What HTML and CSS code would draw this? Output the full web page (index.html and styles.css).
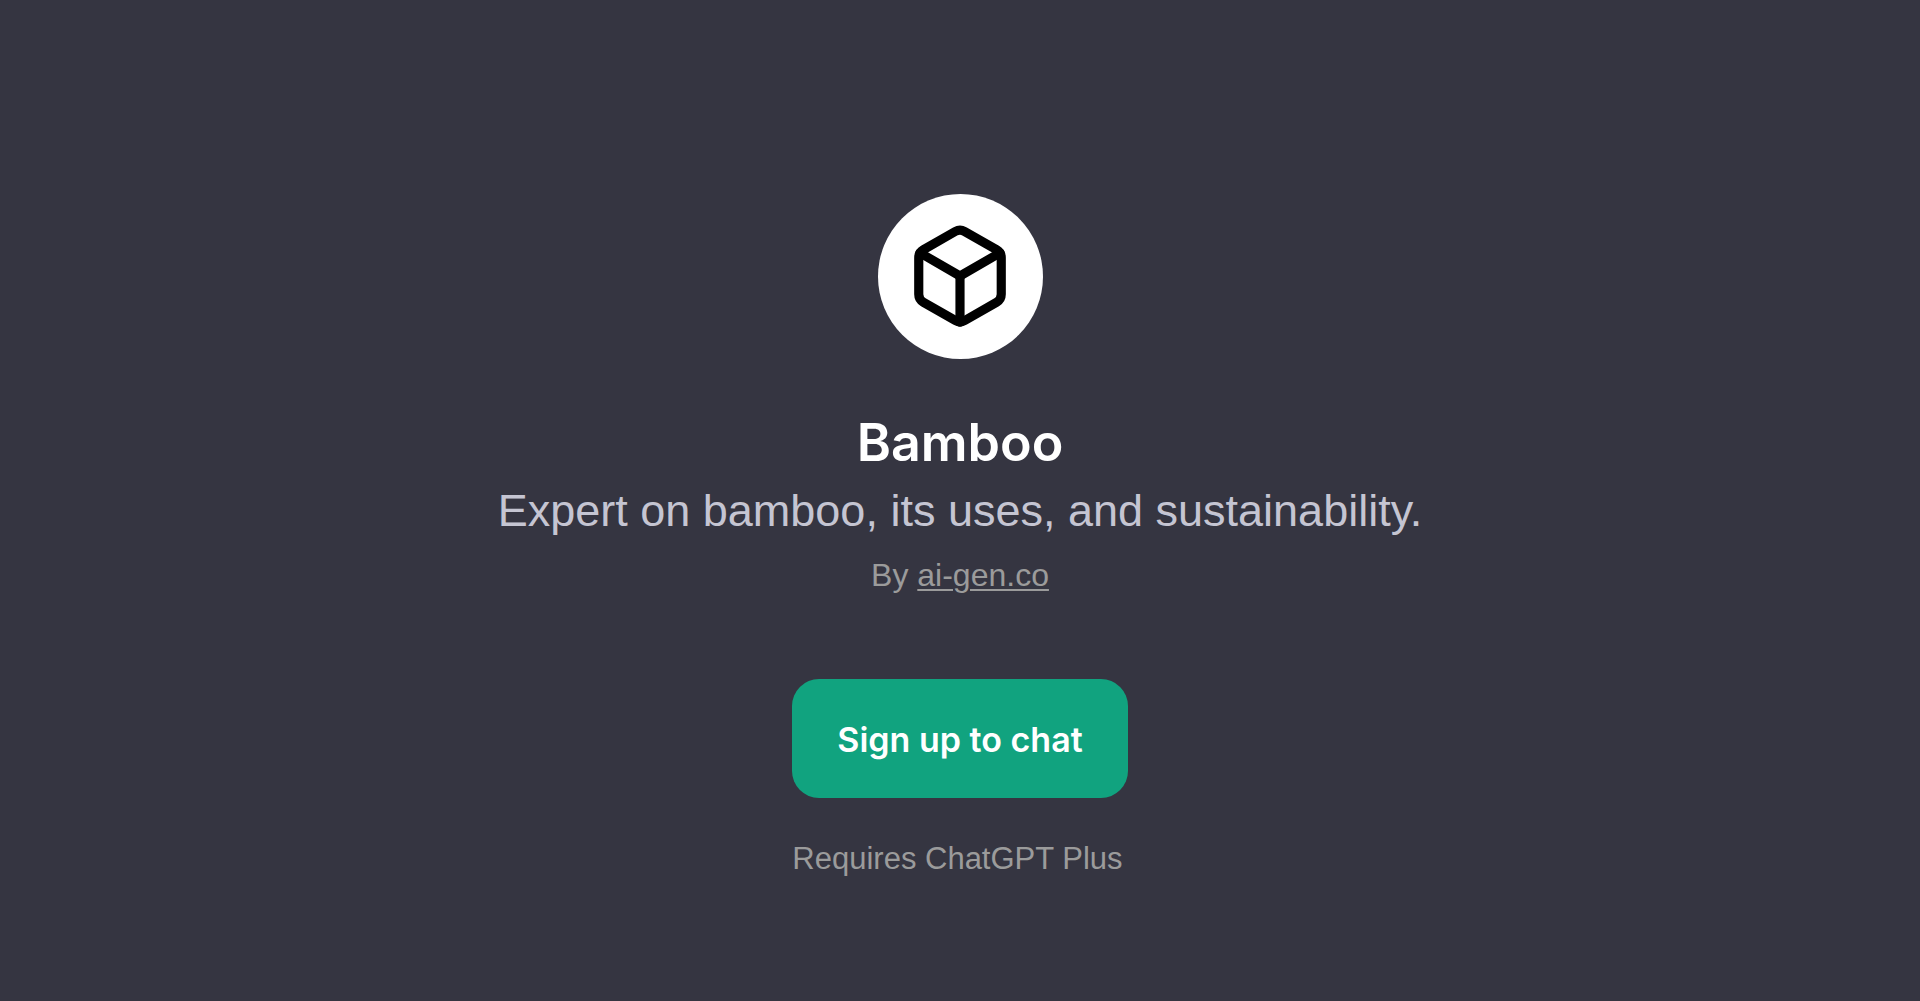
FILE: index.html
```html
<!DOCTYPE html>
<html lang="en">
<head>
	<meta charset="utf-8">
	<meta name="viewport" content="width=device-width, initial-scale=1">
	<title>Bamboo</title>
	<link rel="stylesheet" href="styles.css">
</head>

<body>
<main class="page">
	<div class="avatar">
		<svg class="icon" viewBox="0 0 24 24" aria-hidden="true">
			<path d="M21 16V8a2 2 0 0 0-1-1.73l-7-4a2 2 0 0 0-2 0l-7 4A2 2 0 0 0 3 8v8a2 2 0 0 0 1 1.73l7 4a2 2 0 0 0 2 0l7-4A2 2 0 0 0 21 16z"></path>
			<polyline points="3.27 6.96 12 12.01 20.73 6.96"></polyline>
			<line x1="12" y1="22.08" x2="12" y2="12"></line>
		</svg>
	</div>
	<h1 class="title">Bamboo</h1>
	<p class="description">Expert on bamboo, its uses, and sustainability.</p>
	<p class="author">By <a href="#">ai-gen.co</a></p>
	<div class="signup">
		<button type="button" class="signup-button">Sign up to chat</button>
		<p class="note">Requires ChatGPT Plus</p>
	</div>
</main>
</body>
</html>
```

FILE: styles.css
```css
* {
    box-sizing: border-box;
}
body {
    margin: 0;
    background-color: #353541;
    font-family: "Liberation Sans", Arial, sans-serif;
}
h1, p {
    margin: 0;
}
.page {
    display: flex;
    flex-direction: column;
    align-items: center;
    min-height: 100vh;
    padding: 194px 24px 48px;
    text-align: center;
}
.avatar {
    display: flex;
    align-items: center;
    justify-content: center;
    width: 165px;
    height: 165px;
    margin-bottom: 48px;
    padding-bottom: 1px;
    border-radius: 50%;
    background-color: #ffffff;
}
.icon {
    width: 110px;
    height: 110px;
    fill: none;
    stroke: #000000;
    stroke-width: 2;
    stroke-linecap: round;
    stroke-linejoin: round;
}
.title, .signup-button {
    font-family: Inter, "Liberation Sans", sans-serif;
    font-weight: 600;
    color: #ffffff;
}
.title {
    font-size: 52px;
    line-height: 72px;
}
.description {
    font-size: 45px;
    line-height: 64px;
    color: #c5c5d2;
}
.author, .note {
    line-height: 48px;
    color: #9b9b9b;
}
.author {
    margin-top: 8px;
    font-size: 32px;
}
.author a {
    color: inherit;
    text-decoration: underline;
    text-decoration-thickness: 2px;
    text-underline-offset: 3px;
}
.signup {
    display: flex;
    flex-direction: column;
    margin-top: 80px;
}
.signup-button {
    padding: 37px 45px 34px;
    border: 0;
    border-radius: 27px;
    background-color: #11a37f;
    font-size: 34px;
    line-height: 48px;
    cursor: pointer;
}
.note {
    margin-top: 37px;
    font-size: 31px;
    text-align: left;
}
```
